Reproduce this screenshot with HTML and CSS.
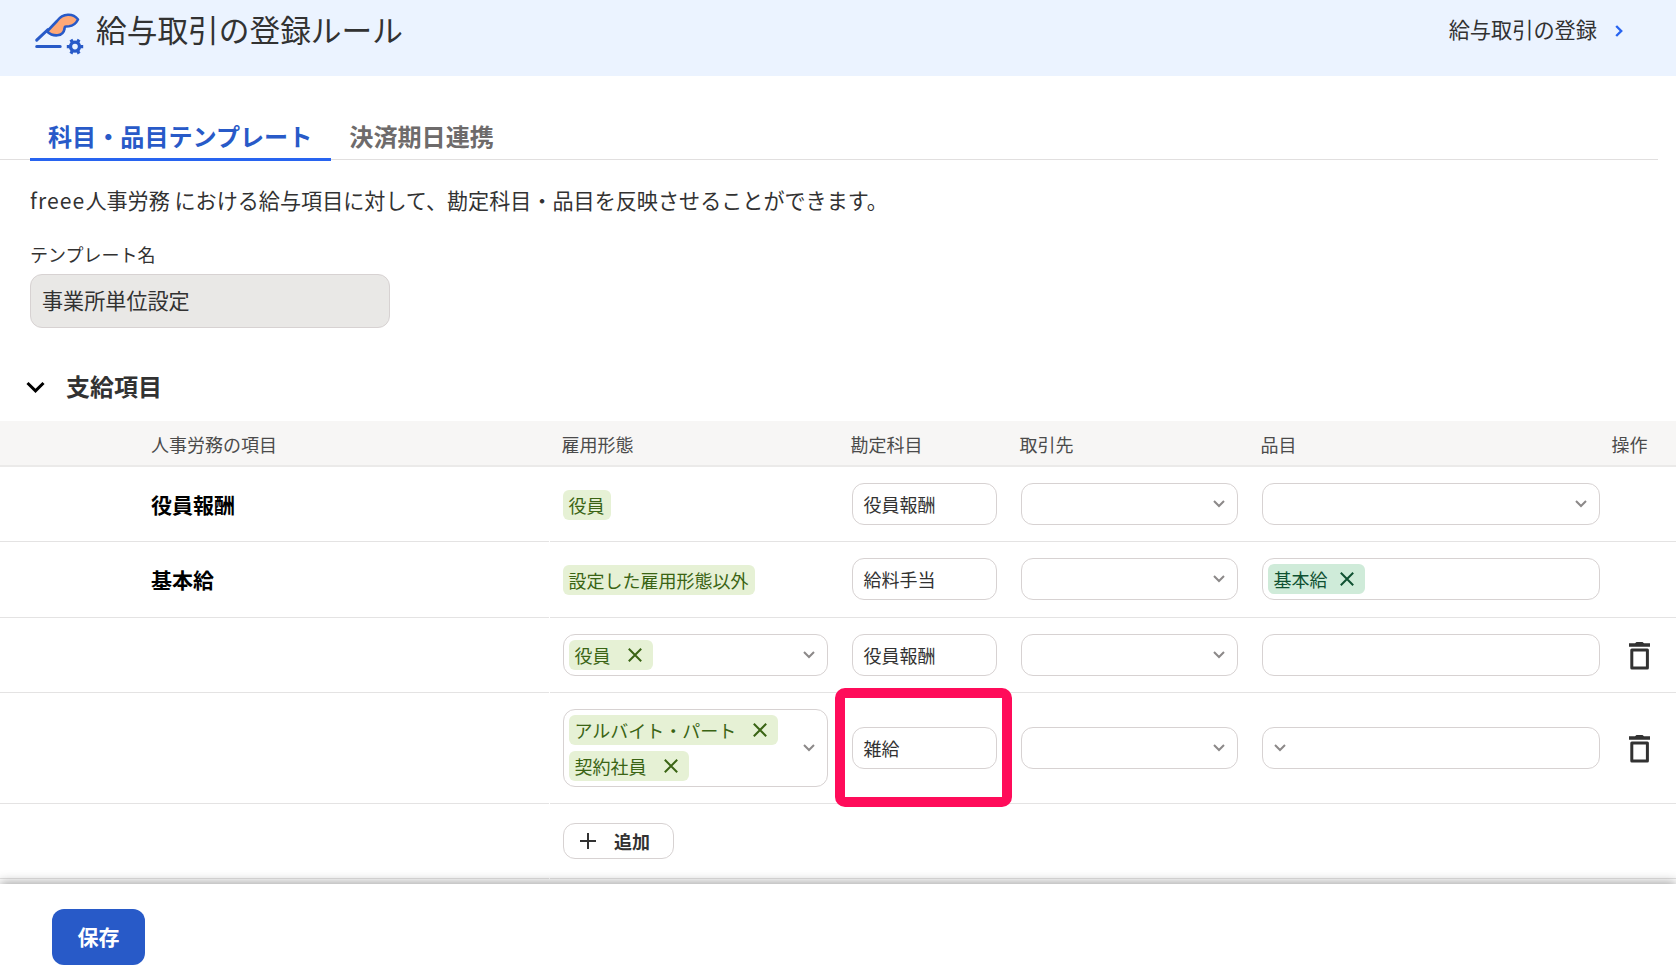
FILE: index.html
```
<!DOCTYPE html>
<html lang="ja">
<head>
    <meta charset="UTF-8">
    <meta name="viewport" content="width=device-width, initial-scale=1.0">
    <title>給与取引の登録ルール</title>
    <link rel="stylesheet" href="styles.css">
</head>
<body>

    <!-- Shared icons -->
    <svg class="icon-defs" width="0" height="0">
        <symbol id="icon-down" viewBox="0 0 12 8">
            <path d="M1 1l5 5 5-5" fill="none" stroke="currentColor" stroke-width="2"/>
        </symbol>
        <symbol id="icon-close" viewBox="0 0 14 14">
            <path d="M.8.8l12.4 12.4M13.2.8L.8 13.2" fill="none" stroke="currentColor" stroke-width="2"/>
        </symbol>
        <symbol id="icon-trash" viewBox="0 0 22 28">
            <path d="M0 1.2h6L7.5 0h6L15 1.2h6v3.600H0z" fill="currentColor"/>
            <path d="M2.800 8h15.600v18h-15.600z" fill="none" stroke="currentColor" stroke-width="3" stroke-linejoin="round"/>
        </symbol>
    </svg>

    <!-- Header -->
    <header class="page-header">
        <svg class="logo" width="50" height="42" viewBox="0 0 50 42">
            <path d="M13 18.500L23 8C29 0 39 0 44 6.500C42 10.500 38.500 13 35 13.200C31 13.200 30.500 13.500 30.500 16C29 24 19 24 13 18.500z" fill="#ffa876" stroke="#285ac8" stroke-width="2.600" stroke-linejoin="round"/>
            <path d="M2.700 27.200L14 16.500M2.700 33.600h23.500" fill="none" stroke="#285ac8" stroke-width="3" stroke-linecap="round"/>
            <circle cx="41" cy="33.600" r="4.500" fill="none" stroke="#285ac8" stroke-width="3.400"/>
            <path d="M46.500 33.600h2.700M35.500 33.600h-2.700M43.800 28.900l1.300-2.300M43.800 38.300l1.300 2.300M38.200 28.900l-1.300-2.300M38.200 38.300l-1.300 2.300" stroke="#285ac8" stroke-width="3.200"/>
        </svg>
        <h1>給与取引の登録ルール</h1>
        <a class="header-link" href="#"><span>給与取引の登録</span>
            <svg width="8" height="12" viewBox="0 0 8 12"><path d="M1.200 1l5 5-5 5" fill="none" stroke="#2864f0" stroke-width="2.400"/></svg>
        </a>
    </header>

    <!-- Tabs -->
    <nav class="tabs">
        <a class="tab active" href="#">科目・品目テンプレート</a>
        <a class="tab" href="#">決済期日連携</a>
    </nav>

    <div class="template">
        <p><span class="brand">freee</span>人事労務 における給与項目に対して、勘定科目・品目を反映させることができます。</p>
        <label for="template-name">テンプレート名</label>
        <input type="text" id="template-name" value="事業所単位設定" disabled>
    </div>

    <h2 class="section-title">
        <svg width="19" height="13" viewBox="0 0 19 13"><path d="M1.500 2l8 7.800 8-7.800" fill="none" stroke="#000" stroke-width="3"/></svg>
        支給項目
    </h2>

    <!-- Items table -->
    <main class="items">
        <div class="row head">
            <div class="name">人事労務の項目</div>
            <div class="details">
                <div>雇用形態</div>
                <div>勘定科目</div>
                <div>取引先</div>
                <div>品目</div>
                <div class="action">操作</div>
            </div>
        </div>

        <div class="row">
            <div class="name">役員報酬</div>
            <div class="details">
                <div><span class="chip">役員</span></div>
                <div class="box">役員報酬</div>
                <div class="box select"><svg class="down"><use href="#icon-down"/></svg></div>
                <div class="box select"><svg class="down"><use href="#icon-down"/></svg></div>
            </div>
        </div>

        <div class="row">
            <div class="name">基本給</div>
            <div class="details">
                <div><span class="chip">設定した雇用形態以外</span></div>
                <div class="box">給料手当</div>
                <div class="box select"><svg class="down"><use href="#icon-down"/></svg></div>
                <div class="box tags"><span class="chip item">基本給<svg class="close"><use href="#icon-close"/></svg></span></div>
            </div>
        </div>

        <div class="row">
            <div class="name"></div>
            <div class="details">
                <div class="box select">
                    <div class="chips"><span class="chip">役員<svg class="close"><use href="#icon-close"/></svg></span></div>
                    <svg class="down"><use href="#icon-down"/></svg>
                </div>
                <div class="box">役員報酬</div>
                <div class="box select"><svg class="down"><use href="#icon-down"/></svg></div>
                <div class="box"></div>
                <div class="action"><svg class="trash"><use href="#icon-trash"/></svg></div>
            </div>
        </div>

        <div class="row tall">
            <div class="name"></div>
            <div class="details">
                <div class="box select multi">
                    <div class="chips">
                        <span class="chip">アルバイト・パート<svg class="close"><use href="#icon-close"/></svg></span>
                        <span class="chip">契約社員<svg class="close"><use href="#icon-close"/></svg></span>
                    </div>
                    <svg class="down"><use href="#icon-down"/></svg>
                </div>
                <div class="box marked">雑給</div>
                <div class="box select"><svg class="down"><use href="#icon-down"/></svg></div>
                <div class="box"><svg class="down"><use href="#icon-down"/></svg></div>
                <div class="action"><svg class="trash"><use href="#icon-trash"/></svg></div>
            </div>
        </div>

        <div class="row">
            <div class="name"></div>
            <div class="details">
                <button class="add-button" type="button">
                    <svg width="16" height="16" viewBox="0 0 16 16"><path d="M8 0v16M0 8h16" stroke="#323232" stroke-width="2"/></svg>
                    追加
                </button>
            </div>
        </div>
    </main>

    <footer class="footer">
        <button class="save-button" type="button">保存</button>
    </footer>

</body>
</html>
```
FILE: styles.css
```
* {
    box-sizing: border-box;
}

body {
    margin: 0;
    height: 980px;
    display: flex;
    flex-direction: column;
    overflow: hidden;
    font-family: "Noto Sans CJK JP", sans-serif;
    font-size: 18px;
    color: #323232;
    background-color: #fff;
}

a {
    color: inherit;
    text-decoration: none;
}

svg {
    flex-shrink: 0;
}

.icon-defs {
    position: absolute;
}

/* Header */
.page-header {
    height: 76px;
    flex-shrink: 0;
    display: flex;
    align-items: center;
    padding: 0 53px 14px 34px;
    background-color: #ebf3ff;
}

.logo {
    margin-top: 6px;
}

h1 {
    margin: 0 0 4px 12px;
    font-size: 30.700px;
    font-weight: 400;
    line-height: 40px;
}

.header-link {
    display: flex;
    align-items: center;
    gap: 18px;
    margin-left: auto;
    font-size: 21.200px;
}

.header-link span {
    padding-bottom: 5px;
}

/* Tabs */
.tabs {
    display: flex;
    height: 45px;
    flex-shrink: 0;
    margin: 39px 18px 0 0;
    padding-left: 30px;
    border-bottom: 1px solid #e1dfdf;
}

.tab {
    height: 46px;
    padding: 0 18px 6px;
    display: flex;
    align-items: center;
    font-size: 24.100px;
    font-weight: 700;
    color: #6e6b6b;
}

.tab.active {
    color: #285ac8;
    border-bottom: 3px solid #2864f0;
    padding-bottom: 3px;
    padding-right: 19px;
}

/* Template name */
.template {
    padding: 24px 30px 0;
}

.template p {
    margin: 0;
    font-size: 21.100px;
    line-height: 32px;
}

.brand {
    letter-spacing: 1.100px;
}

.template label {
    display: block;
    margin-top: 25px;
    line-height: 26px;
}

.template input {
    display: block;
    width: 360px;
    height: 54px;
    margin-top: 7px;
    padding: 0 11px 2px;
    border: 1px solid #d7d2d2;
    border-radius: 12px;
    background-color: #e9e8e6;
    font-family: inherit;
    font-size: 21.100px;
    color: #323232;
}

.section-title {
    display: flex;
    align-items: center;
    gap: 21px;
    margin: 40px 0 0 26px;
    font-size: 24px;
    font-weight: 700;
    line-height: 36px;
}

.section-title svg {
    margin-top: 2px;
}

/* Items table */
.items {
    margin-top: 17px;
}

.row {
    display: flex;
    height: 75.250px;
}

.row.tall {
    height: 111.250px;
}

.name {
    width: 549px;
    margin-right: 1px;
    padding-left: 151px;
    display: flex;
    align-items: center;
    border-bottom: 1px solid #e4e3e3;
    font-size: 21px;
    font-weight: 700;
    color: #000;
}

.details {
    flex: 1;
    display: grid;
    grid-template-columns: 265px 145px 217px 338px 1fr;
    column-gap: 24px;
    align-items: center;
    padding-left: 12.500px;
    border-bottom: 1px solid #e4e3e3;
}

.row.head {
    height: 46px;
    background-color: #f7f6f5;
    border-bottom: 2px solid #ebeae9;
    line-height: 26px;
}

.head .name,
.head .details {
    padding-top: 2px;
    border: none;
    font-size: 18px;
    font-weight: 400;
    color: #4b4b4b;
}

.head .details > div {
    margin-left: -1px;
}

.head .details .action {
    margin-left: -12px;
}

.box {
    display: flex;
    align-items: center;
    height: 42px;
    padding: 0 12px 0 11px;
    border: 1px solid #d7d2d2;
    border-radius: 12px;
    background-color: #fff;
    position: relative;
}

.box.select {
    justify-content: flex-end;
    padding-left: 5px;
}

.box.tags {
    padding-left: 5px;
}

.box.multi {
    height: 78px;
}

.chips {
    display: flex;
    flex-direction: column;
    align-items: flex-start;
    gap: 6px;
    margin-right: auto;
}

.chip {
    display: inline-flex;
    align-items: center;
    height: 30px;
    padding: 0 6px;
    border-radius: 6px;
    background-color: #e6f1d5;
    color: #3a6414;
    vertical-align: middle;
}

.chip .close {
    width: 14px;
    height: 14px;
    margin: 0 5px 0 17px;
}

.chip.item {
    background-color: #cfebd9;
    color: #0f5132;
}

.chip.item .close {
    margin-left: 12px;
}

.down {
    width: 12px;
    height: 8px;
    color: #8c8989;
}

.trash {
    display: block;
    width: 22px;
    height: 28px;
    margin: 2px 0 0 5px;
}

/* Outline around the account field of the part-time row */
.marked::after {
    content: "";
    position: absolute;
    inset: -40px -16px -39px -18px;
    border: 10px solid #ff0c5a;
    border-radius: 10px;
}

button {
    display: flex;
    align-items: center;
    justify-content: center;
    font-family: inherit;
    cursor: pointer;
}

.add-button {
    width: 111px;
    height: 36px;
    gap: 18px;
    padding: 0 6px 0 0;
    border: 1px solid #d7d2d2;
    border-radius: 12px;
    background-color: #fff;
    font-size: 18px;
    font-weight: 700;
    color: #323232;
}

/* Footer */
.footer {
    flex-shrink: 0;
    height: 96px;
    margin-top: auto;
    padding: 25px 52px;
    background-color: #fff;
    box-shadow: 0 -2px 10px rgba(0, 0, 0, 0.35);
    position: relative;
}

.save-button {
    width: 93px;
    height: 56px;
    padding: 0 0 2px;
    border: none;
    border-radius: 12px;
    background-color: #285ac8;
    color: #fff;
    font-size: 21px;
    font-weight: 700;
}
```
